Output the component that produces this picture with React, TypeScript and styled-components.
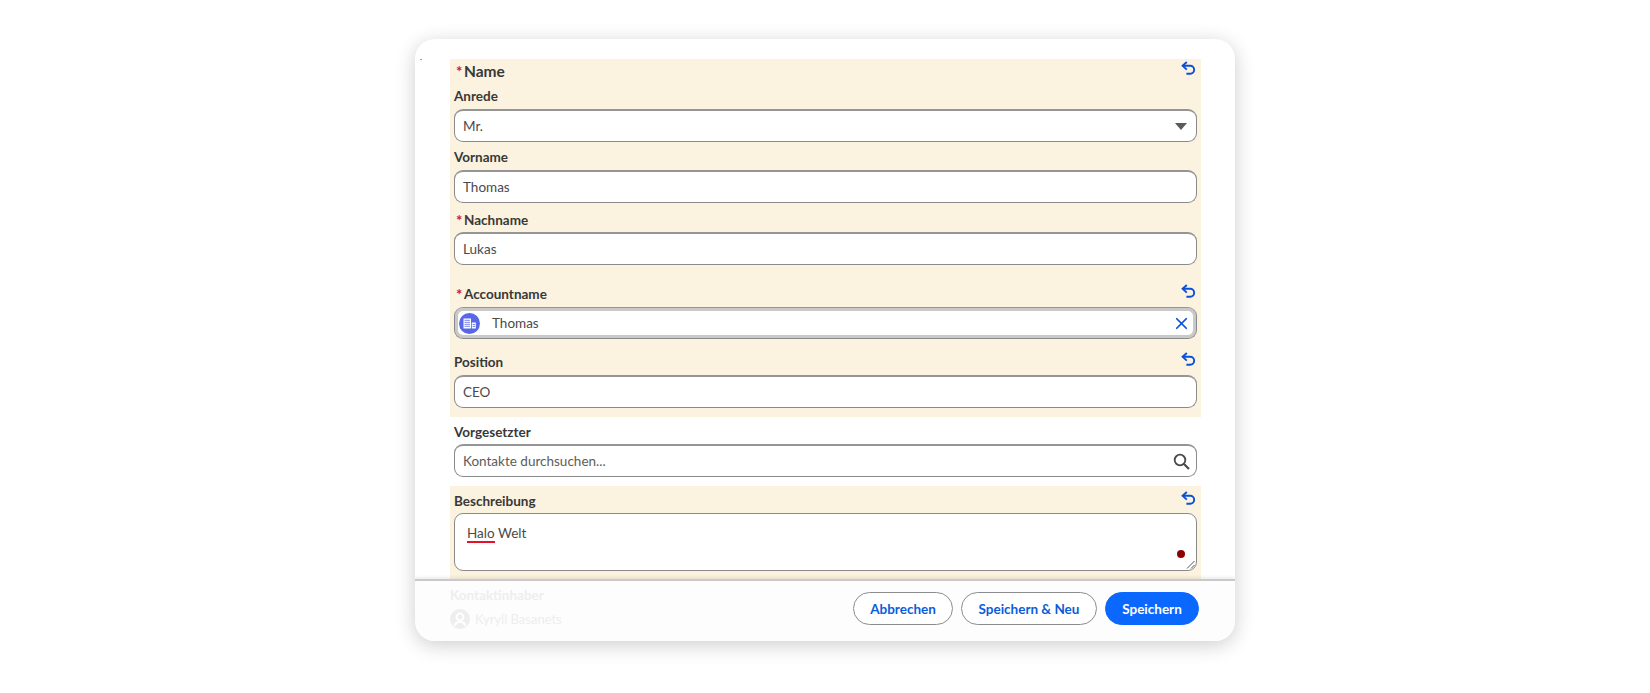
import React from "react";
import styled, { createGlobalStyle } from "styled-components";
import { X } from "lucide-react";

const GlobalStyle = createGlobalStyle`
  html, body {
    margin: 0;
    padding: 0;
    background: #fff;
    font-family: "Lato", "Open Sans", sans-serif;
  }
`;

const Page = styled.div`
  width: 1650px;
  height: 693px;
  overflow: hidden;
  padding: 39px 0 0 415px;
  box-sizing: border-box;
`;

const Modal = styled.div`
  width: 820px;
  height: 602px;
  background: #fff;
  border-radius: 20px;
  box-shadow: 0 4px 20px rgba(0, 0, 0, 0.2);
  overflow: hidden;
  position: relative;
`;

const Speck = styled.span`
  position: absolute;
  left: 5px;
  top: 20px;
  width: 2px;
  height: 1px;
  background: #999;
`;

const Body = styled.div`
  padding: 20px 34px 0 35px;
`;

const Section = styled.div<{ $pb: number }>`
  background: #fbf2e0;
  padding: 0 4px ${(p) => p.$pb}px 4px;
`;

const PlainSection = styled.div`
  padding: 0 4px 9px 4px;
`;

const LabelRow = styled.div<{ $h: number; $pt?: number }>`
  display: flex;
  align-items: center;
  justify-content: space-between;
  box-sizing: border-box;
  height: ${(p) => p.$h}px;
  padding-top: ${(p) => p.$pt ?? 0}px;
`;

const LabelGroup = styled.span`
  display: inline-flex;
  align-items: center;
`;

const Label = styled.span`
  font-size: 13.5px;
  font-weight: 700;
  color: #383838;
`;

const Title = styled(Label)`
  font-size: 15.5px;
`;

const Star = styled.span`
  display: inline-block;
  width: 6px;
  margin: 0 2px;
  color: #c4165a;
  font-size: 15px;
  font-weight: 700;
  line-height: 14px;
  text-align: center;
`;

const Field = styled.div`
  height: 33px;
  box-sizing: border-box;
  border: 1px solid #8a8a8a;
  border-top: 2px solid #959595;
  border-radius: 9px;
  background: #fff;
  display: flex;
  align-items: center;
  justify-content: space-between;
  padding: 0 9px 0 8px;
  font-size: 13.5px;
  color: #4a4a4a;
`;

const FocusField = styled(Field)`
  height: 32px;
  border-top-width: 1px;
  box-shadow: inset 0 0 0 3px #c9c9c9;
  padding: 0 5px 0 4px;
`;

const AccountLeft = styled.div`
  display: flex;
  align-items: center;
  gap: 12px;
`;

const Placeholder = styled.span`
  color: #5c5c5c;
`;

const TextArea = styled.div`
  height: 58px;
  box-sizing: border-box;
  border: 1px solid #8a8a8a;
  border-radius: 9px;
  background: #fff;
  padding: 10px 12px;
  font-size: 13.5px;
  line-height: 18px;
  color: #4a4a4a;
  position: relative;
`;

const Misspelled = styled.span`
  border-bottom: 2px solid #e8102a;
`;

const Dot = styled.span`
  position: absolute;
  right: 11px;
  bottom: 12px;
  width: 8px;
  height: 8px;
  border-radius: 50%;
  background: #8e0000;
`;

const Grip = styled.svg`
  position: absolute;
  right: 1px;
  bottom: 1px;
`;

const Footer = styled.div`
  position: absolute;
  left: 0;
  right: 0;
  bottom: 0;
  height: 62px;
  box-sizing: border-box;
  background: #fdfdfd;
  border-top: 2px solid #c9c9c9;
  box-shadow: 0 -2px 3px rgba(0, 0, 0, 0.07);
  display: flex;
  align-items: center;
  justify-content: flex-end;
  gap: 8px;
  padding: 0 36px 5px 0;
`;

const Ghost = styled.div`
  position: absolute;
  left: 35px;
  top: 6px;
  color: #eeeeee;
  font-size: 13.5px;
  line-height: 16px;
  font-weight: 700;
`;

const GhostUser = styled.div`
  display: flex;
  align-items: center;
  gap: 5px;
  margin-top: 6px;
  font-size: 13px;
  font-weight: 400;
`;

const GhostAvatar = styled.span`
  width: 20px;
  height: 20px;
  border-radius: 50%;
  background: #eeeeee;
  display: inline-flex;
  align-items: center;
  justify-content: center;
`;

const Button = styled.button<{ $primary?: boolean; $w: number }>`
  width: ${(p) => p.$w}px;
  height: 33px;
  box-sizing: border-box;
  border-radius: 17px;
  border: 1px solid ${(p) => (p.$primary ? "#0b68ff" : "#8c8c8c")};
  background: ${(p) => (p.$primary ? "#0b68ff" : "#fff")};
  color: ${(p) => (p.$primary ? "#fff" : "#0b5cdb")};
  font-family: inherit;
  font-size: 13.5px;
  font-weight: 700;
  padding: 0;
`;

const UndoSvg = styled.svg`
  margin-bottom: 5px;
  margin-right: 1px;
`;

const CloseWrap = styled.span`
  display: inline-flex;
`;

const SearchSvg = styled.svg`
  margin-right: -3px;
`;

const UndoIcon = () => (
  <UndoSvg width="15" height="15" viewBox="0 0 15 15" fill="none" stroke="#0b50d8" strokeWidth="1.9">
    <path d="M5.8 1 1.6 4.8l4.2 3.8" />
    <path d="M1.6 4.8h7.6a3.9 3.9 0 0 1 0 7.9H5.4" />
  </UndoSvg>
);

const Caret = () => (
  <svg width="12" height="7" viewBox="0 0 12 7">
    <path d="M0 0h12L6 7z" fill="#5b5b5b" />
  </svg>
);

const SearchIcon = () => (
  <SearchSvg width="17" height="17" viewBox="0 0 17 17" fill="none" stroke="#4a4a4a" strokeWidth="1.8">
    <circle cx="7" cy="7" r="5.3" />
    <path d="m11 11 5 5" strokeWidth="2.2" />
  </SearchSvg>
);

const AccountIcon = () => (
  <svg width="21" height="21" viewBox="0 0 21 21">
    <circle cx="10.5" cy="10.5" r="10.5" fill="#5867e8" />
    <path d="M4.5 5.5h7.5v10H4.5z" fill="#fff" />
    <path d="M12.8 9.5h4v6h-4z" fill="#fff" />
    <path d="M5.5 7.3H11M5.5 9.3H11M5.5 11.3H11M5.5 13.3H11M13.6 11.5h2.4M13.6 13.5h2.4" stroke="#5867e8" strokeWidth="0.8" />
  </svg>
);

export default function App() {
  return (
    <Page>
      <GlobalStyle />
      <Modal>
        <Speck />
        <Body>
          <Section $pb={9}>
            <LabelRow $h={23}>
              <LabelGroup>
                <Star>*</Star>
                <Title>Name</Title>
              </LabelGroup>
              <UndoIcon />
            </LabelRow>
            <LabelRow $h={27} $pt={1}>
              <Label>Anrede</Label>
            </LabelRow>
            <Field>
              Mr.
              <Caret />
            </Field>
            <LabelRow $h={28} $pt={2}>
              <Label>Vorname</Label>
            </LabelRow>
            <Field>Thomas</Field>
            <LabelRow $h={29} $pt={4}>
              <LabelGroup>
                <Star>*</Star>
                <Label>Nachname</Label>
              </LabelGroup>
            </LabelRow>
            <Field>Lukas</Field>
            <LabelRow $h={42} $pt={16}>
              <LabelGroup>
                <Star>*</Star>
                <Label>Accountname</Label>
              </LabelGroup>
              <UndoIcon />
            </LabelRow>
            <FocusField>
              <AccountLeft>
                <AccountIcon />
                Thomas
              </AccountLeft>
              <CloseWrap>
                <X size={19} color="#0b50d8" strokeWidth={2.2} />
              </CloseWrap>
            </FocusField>
            <LabelRow $h={36} $pt={10}>
              <Label>Position</Label>
              <UndoIcon />
            </LabelRow>
            <Field>CEO</Field>
          </Section>
          <PlainSection>
            <LabelRow $h={27} $pt={2}>
              <Label>Vorgesetzter</Label>
            </LabelRow>
            <Field>
              <Placeholder>Kontakte durchsuchen...</Placeholder>
              <SearchIcon />
            </Field>
          </PlainSection>
          <Section $pb={8}>
            <LabelRow $h={27} $pt={3}>
              <Label>Beschreibung</Label>
              <UndoIcon />
            </LabelRow>
            <TextArea>
              <Misspelled>Halo</Misspelled> Welt
              <Dot />
              <Grip width="9" height="9" viewBox="0 0 9 9" stroke="#555" strokeWidth="1" fill="none">
                <path d="M1 8.5 8.5 1M5 8.5 8.5 5" />
              </Grip>
            </TextArea>
          </Section>
        </Body>
        <Footer>
          <Ghost>
            Kontaktinhaber
            <GhostUser>
              <GhostAvatar>
                <svg width="12" height="14" viewBox="0 0 12 14" fill="none" stroke="#fff" strokeWidth="2">
                  <circle cx="6" cy="5" r="3.4" />
                  <path d="M1 14c0-3 2-4 5-4s5 1 5 4" />
                </svg>
              </GhostAvatar>
              Kyryll Basanets
            </GhostUser>
          </Ghost>
          <Button $w={100}>Abbrechen</Button>
          <Button $w={136}>Speichern &amp; Neu</Button>
          <Button $primary $w={94}>
            Speichern
          </Button>
        </Footer>
      </Modal>
    </Page>
  );
}
